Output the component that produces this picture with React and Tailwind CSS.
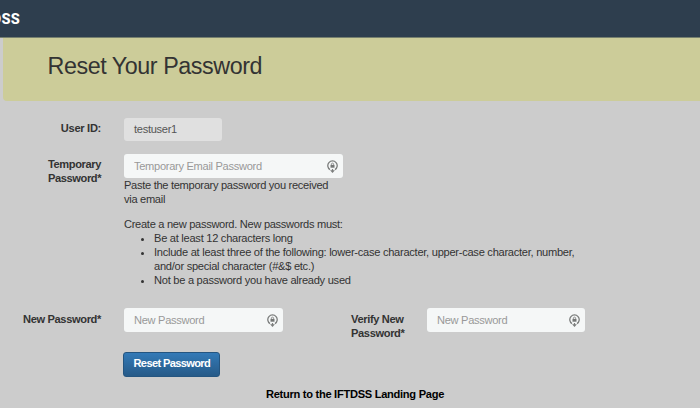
function KeyIcon() {
  return (
    <svg className="h-[13px] w-[11px] shrink-0" viewBox="0 0 11 13" fill="none" stroke="#7c7e7d">
      <path d="M3 9.6A4.7 4.7 0 1 1 8 9.6" strokeWidth="1.3" />
      <path d="M5.5 9v3M3.7 10.2l1.8 2 1.8-2" strokeWidth="1.1" />
      <path d="M4.4 5V4.2a1.1 1.1 0 0 1 2.2 0V5" strokeWidth="0.8" />
      <rect x="3.5" y="4.9" width="4" height="2.8" fill="#747675" stroke="none" />
    </svg>
  );
}

function PasswordField({ placeholder, className }) {
  return (
    <div className={`flex h-6 items-center rounded-[3px] bg-[#f5f7f7] pr-[5px] pl-[10px] ${className}`}>
      <input
        type="text"
        placeholder={placeholder}
        className="min-w-0 flex-1 bg-transparent leading-[14px] tracking-[-0.3px] outline-none placeholder:text-[#999999]"
      />
      <KeyIcon />
    </div>
  );
}

export default function App() {
  return (
    <div className="h-[408px] w-[700px] overflow-hidden bg-[#cccccc] font-['Liberation_Sans',Arial,sans-serif] text-[11.1px] leading-[14.1px] tracking-[-0.3px] text-[#333333]">
      <header className="flex h-[38px] items-start border-b border-[#76806f] bg-[#2e3e4e] pt-[10px]">
        <div className="flex w-[20px] justify-end font-['Roboto',sans-serif] text-[14.5px] leading-5 font-extrabold tracking-[0.3px] text-white">
          <span>IFTDSS</span>
        </div>
      </header>
      <div className="ml-[3px] h-[63px] rounded-bl-[4px] bg-[#cccc99] pt-[15px] pl-[44.5px]">
        <h1 className="text-[23.3px] leading-[26px] tracking-[-0.43px]">Reset Your Password</h1>
      </div>

      <main>
        <div className="flex h-[53px] pt-[17px]">
          <label className="mt-[3px] w-[101px] text-right font-bold">User ID:</label>
          <div className="ml-[23px] flex h-[23px] w-[98px] items-center rounded-[3px] bg-[#e0e0e0] pl-[10px] text-[#555555]">
            testuser1
          </div>
        </div>

        <div className="flex h-[63px]">
          <label className="mt-[3px] ml-[48px] w-[53px] font-bold tracking-[-0.4px]">
            Temporary Password*
          </label>
          <div className="ml-[23px] w-[219px]">
            <PasswordField placeholder="Temporary Email Password" className="w-[219px]" />
            <p>
              Paste the temporary password you received
              <br />
              via email
            </p>
          </div>
        </div>

        <div className="ml-[124px] h-[91px] whitespace-nowrap">
          <p>Create a new password. New passwords must:</p>
          <ul className="list-disc pl-[30px] tracking-[-0.27px]">
            <li>Be at least 12 characters long</li>
            <li>
              Include at least three of the following: lower-case character, upper-case character, number,
              <br />
              and/or special character (#&amp;$ etc.)
            </li>
            <li>Not be a password you have already used</li>
          </ul>
        </div>

        <div className="flex h-[44px]">
          <label className="mt-[4px] w-[101px] text-right font-bold tracking-[-0.36px]">New Password*</label>
          <PasswordField placeholder="New Password" className="ml-[23px] w-[159px]" />
          <label className="mt-[4px] ml-[68px] w-[76px] font-bold tracking-[-0.36px]">
            Verify New
            <br />
            Password*
          </label>
          <PasswordField placeholder="New Password" className="w-[158px]" />
        </div>

        <button className="ml-[123px] flex h-[25px] w-[97px] items-center rounded-[3px] border border-[#245580] bg-linear-to-b from-[#337ab7] to-[#265a88] pb-[2px] pl-[9.5px] font-bold tracking-[-0.65px] whitespace-nowrap text-white">
          Reset Password
        </button>
        <p className="mt-[10px] pl-[10px] text-center font-bold tracking-[-0.28px] text-black">Return to the IFTDSS Landing Page</p>
      </main>
    </div>
  );
}
